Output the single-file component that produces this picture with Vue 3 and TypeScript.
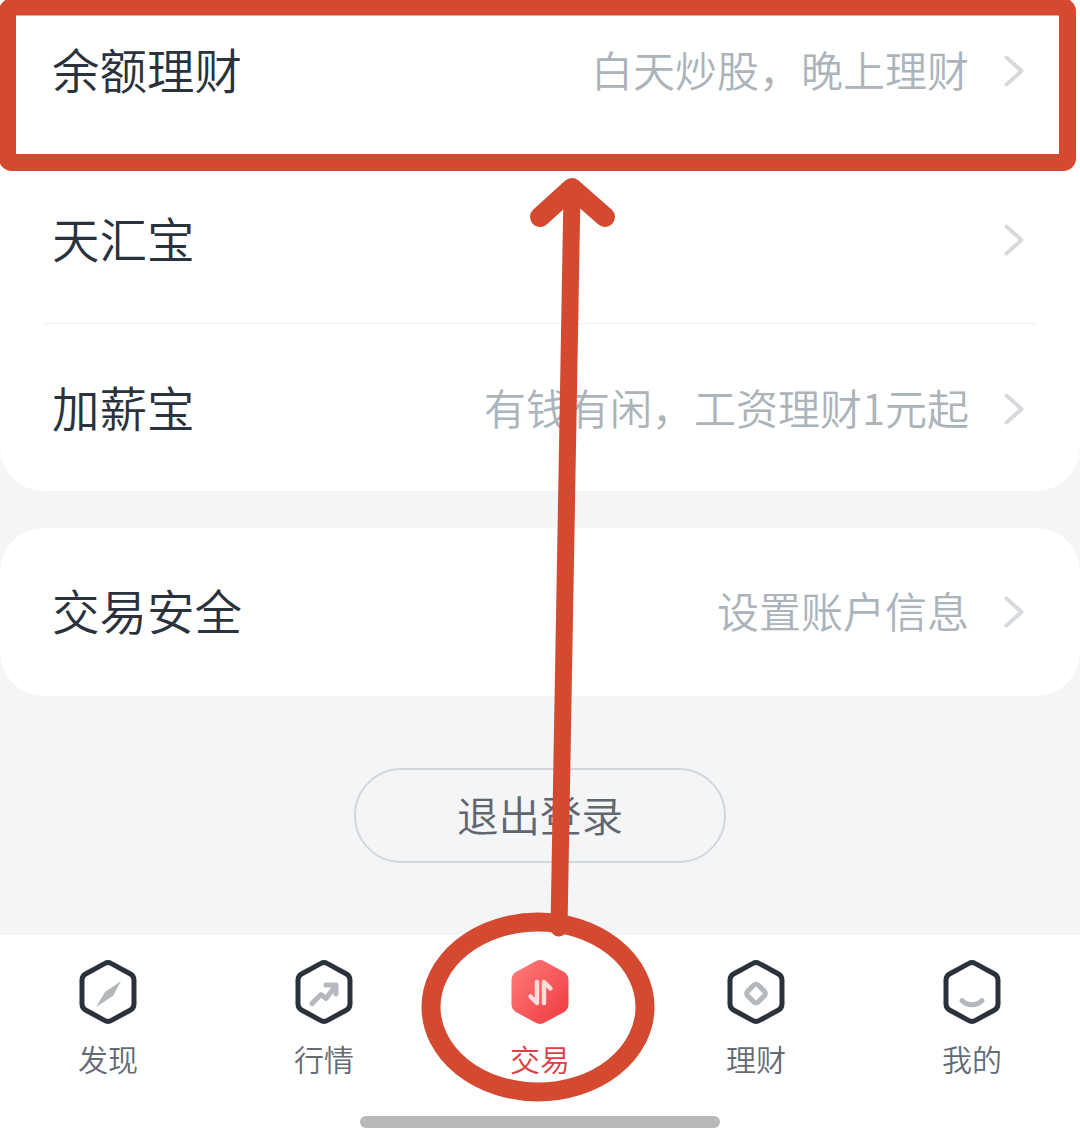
<script setup lang="ts">
interface Row {
  title: string;
  hint?: string;
}

const products: Row[] = [
  { title: '余额理财', hint: '白天炒股，晚上理财' },
  { title: '天汇宝' },
  { title: '加薪宝', hint: '有钱有闲，工资理财1元起' },
];

const tabs = [
  { key: 'discover', label: '发现' },
  { key: 'market', label: '行情' },
  { key: 'trade', label: '交易' },
  { key: 'finance', label: '理财' },
  { key: 'mine', label: '我的' },
];

const hexagon = 'M25.5 3.6a7 7 0 0 1 7 0l19 10.4a7 7 0 0 1 3.5 6v24a7 7 0 0 1-3.5 6l-19 10.4a7 7 0 0 1-7 0l-19-10.4a7 7 0 0 1-3.5-6V20a7 7 0 0 1 3.5-6z';
</script>

<template>
  <div class="page">
    <main class="content">
      <section class="card">
        <template v-for="(row, i) in products" :key="row.title">
          <div v-if="i === 2" class="divider"></div>
          <div class="row">
            <span class="title">{{ row.title }}</span>
            <span class="hint">{{ row.hint }}</span>
            <svg class="chevron" viewBox="0 0 20 32" width="20" height="32">
              <path d="M2.5 2.5 17.5 16 2.5 29.5" />
            </svg>
          </div>
        </template>
      </section>

      <section class="card single">
        <div class="row">
          <span class="title">交易安全</span>
          <span class="hint">设置账户信息</span>
          <svg class="chevron" viewBox="0 0 20 32" width="20" height="32">
            <path d="M2.5 2.5 17.5 16 2.5 29.5" />
          </svg>
        </div>
      </section>

      <button class="logout">退出登录</button>
    </main>

    <nav class="tabbar">
      <div class="tabs">
        <div v-for="tab in tabs" :key="tab.key" class="tab" :class="{ active: tab.key === 'trade' }">
          <svg class="tab-icon" viewBox="0 0 58 64" width="58" height="64">
            <defs v-if="tab.key === 'trade'">
              <linearGradient id="tradeFill" x1="0" y1="0" x2="1" y2="1">
                <stop offset="0" stop-color="#ff7b79" />
                <stop offset="1" stop-color="#ee3a42" />
              </linearGradient>
            </defs>
            <path
              v-if="tab.key === 'trade'"
              :d="hexagon"
              fill="url(#tradeFill)"
              stroke="url(#tradeFill)"
              stroke-width="5"
            />
            <path v-else :d="hexagon" class="hex" />
            <path v-if="tab.key === 'discover'" d="M42 21 26 32 17 47 34 36z" fill="#b3b8bb" />
            <g v-if="tab.key === 'market'" class="glyph">
              <path d="M17 43.500l9-9 5 4 9-12" />
              <path d="M31 25h10v9" />
            </g>
            <path v-if="tab.key === 'trade'" d="M26 22v21l-6.500-6.500M33 43V22l6.500 6.500" fill="none" stroke="#ffdcda" stroke-width="4.500" stroke-linecap="round" stroke-linejoin="round" />
            <rect v-if="tab.key === 'finance'" x="21.500" y="26" width="15" height="15" rx="3" transform="rotate(45 29 33.500)" class="glyph" />
            <path v-if="tab.key === 'mine'" d="M19 40.500c5 5.500 15 5.500 20 0" class="glyph" />
          </svg>
          <span class="tab-label">{{ tab.label }}</span>
        </div>
      </div>
      <div class="home-bar"></div>
    </nav>

    <!-- hand-drawn markup lying over the screenshot -->
    <svg class="markup" viewBox="0 0 1080 1148" width="1080" height="1148">
      <rect x="7.500" y="7" width="1060" height="155.500" rx="4" fill="none" stroke="#d44a31" stroke-width="17" />
      <path d="M559 928 572 192" fill="none" stroke="#d44a31" stroke-width="17" stroke-linecap="round" />
      <path d="M540 217 572 188 605 217" fill="none" stroke="#d44a31" stroke-width="20" stroke-linecap="round" stroke-linejoin="round" />
      <ellipse cx="538" cy="1007" rx="107" ry="85" fill="none" stroke="#d44a31" stroke-width="19" />
    </svg>
  </div>
</template>

<style scoped>
.page {
  position: relative;
  width: 1080px;
  height: 1148px;
  display: flex;
  flex-direction: column;
  overflow: hidden;
  background: #f4f5f7;
  font-family: "Noto Sans CJK SC", "Noto Sans", sans-serif;
}

.content {
  flex: 1;
  display: flex;
  flex-direction: column;
  align-items: stretch;
}

.card {
  background: #fff;
  height: 505px;
  margin-top: -14px;
  border-radius: 0 0 44px 44px;
  overflow: hidden;
}

.card.single {
  height: 168px;
  margin-top: 37px;
  border-radius: 44px;
}

.row {
  height: 169px;
  display: flex;
  align-items: center;
  padding: 0 56px 0 52px;
  box-sizing: border-box;
}

.card.single .row {
  height: 168px;
}

.divider {
  height: 1px;
  margin: -1px 44px 0;
  background: #f0f1f3;
}

.title {
  margin-bottom: 4px;
  font-size: 47.500px;
  font-weight: 350;
  color: #29323d;
  line-height: 1;
}

.hint {
  margin: 0 0 4px auto;
  font-size: 42px;
  font-weight: 350;
  color: #abb3bb;
  line-height: 1;
}

.chevron {
  flex: none;
  margin-left: 35px;
}

.chevron path {
  fill: none;
  stroke: #d6d9dd;
  stroke-width: 4;
  stroke-linecap: round;
  stroke-linejoin: round;
}

.logout {
  align-self: center;
  width: 372px;
  height: 95px;
  margin-top: 72px;
  border: 2px solid #d3d6d9;
  border-radius: 47.500px;
  background: transparent;
  color: #5f6670;
  font-family: inherit;
  font-size: 41.500px;
  font-weight: 350;
  padding-bottom: 4px;
}

.tabbar {
  flex: none;
  height: 213px;
  background: #fff;
  display: flex;
  flex-direction: column;
  align-items: center;
}

.tabs {
  width: 100%;
  display: grid;
  grid-template-columns: repeat(5, 216px);
  padding-top: 25px;
}

.tab {
  display: flex;
  flex-direction: column;
  align-items: center;
}

.tab-label {
  margin-top: 18px;
  font-size: 30px;
  font-weight: 350;
  line-height: 32px;
  color: #646b75;
}

.tab.active .tab-label {
  color: #dc3f45;
}

.hex {
  fill: none;
  stroke: #29323d;
  stroke-width: 5;
}

.glyph {
  fill: none;
  stroke: #b5b9bf;
  stroke-width: 5;
  stroke-linecap: round;
  stroke-linejoin: round;
}

.home-bar {
  width: 360px;
  height: 12px;
  margin-top: 42px;
  border-radius: 6px;
  background: #b9b9b9;
}

.markup {
  position: absolute;
  left: 0;
  top: 0;
  pointer-events: none;
}
</style>
